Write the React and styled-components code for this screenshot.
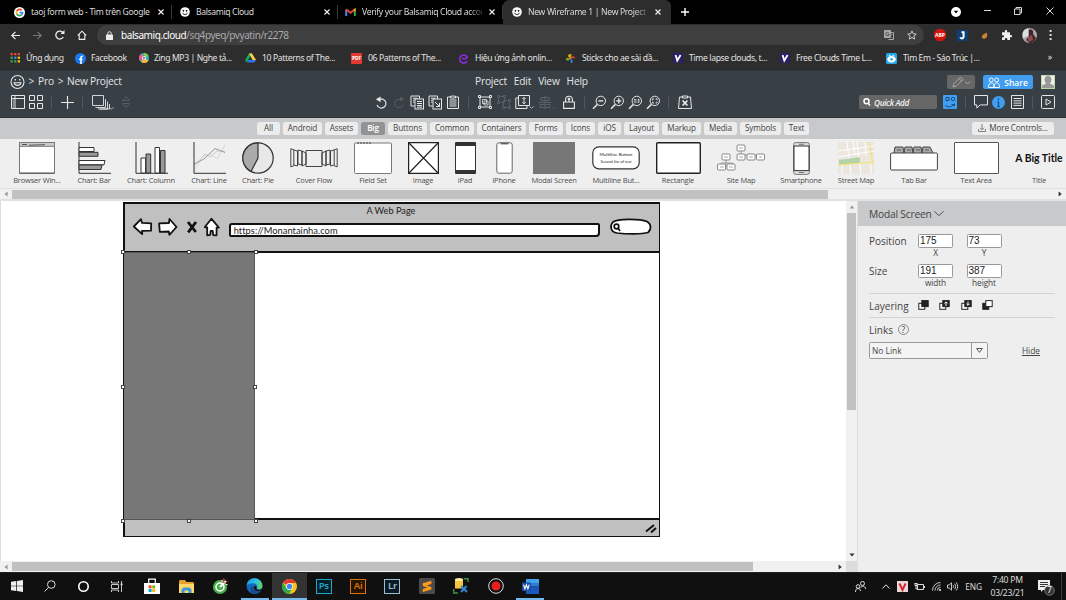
import React from "react";
import styled, { createGlobalStyle } from "styled-components";

const GlobalStyle = createGlobalStyle`
  * { box-sizing: border-box; }
  body { margin: 0; overflow: hidden; background: #000; }
  svg { display: block; flex: none; overflow: visible; }
`;

const ui = `"Noto Sans", "Open Sans", sans-serif`;
const app = `"Open Sans", "Noto Sans", sans-serif`;
const sketch = `Lato, "Open Sans", sans-serif`;

const Screen = styled.div`
  width: 1066px;
  height: 600px;
  display: flex;
  flex-direction: column;
  overflow: hidden;
  font-family: ${ui};
  white-space: nowrap;
`;
const Label = styled.span`
  letter-spacing: ${(p) => p.$ls || 0}px;
  white-space: pre;
`;
const Slot = styled.div`
  width: ${(p) => p.$w}px;
  height: 100%;
  flex: none;
  display: flex;
  align-items: center;
  justify-content: center;
`;

/* ---------- browser chrome ---------- */
const TabStrip = styled.div`
  height: 24px;
  flex: none;
  display: flex;
  background: #000;
  color: #dadada;
  font-size: 8.6px;
`;
const Tab = styled.div`
  width: ${(p) => p.$w}px;
  height: 24px;
  flex: none;
  display: flex;
  align-items: center;
  padding: 0 ${(p) => p.$pr}px 0 ${(p) => p.$pl}px;
  gap: 6px;
  background: ${(p) => (p.$active ? "#2d2d2d" : "transparent")};
  border-radius: 6px 6px 0 0;
`;
const TabTitle = styled.div`
  flex: 1;
  min-width: 0;
  letter-spacing: ${(p) => p.$ls || 0}px;
  mask-image: ${(p) => (p.$fade ? "linear-gradient(90deg,#000 88%,rgba(0,0,0,.15))" : "none")};
`;
const TabRule = styled.div`
  width: 1px;
  height: 14px;
  margin-top: 5px;
  background: #3a3a3a;
`;
const WindowControls = styled.div`
  margin-left: auto;
  height: 22px;
  display: flex;
`;
const AddressRow = styled.div`
  height: 22px;
  flex: none;
  display: flex;
  align-items: center;
  background: #2d2d2d;
`;
const NavButtons = styled.div`
  display: flex;
  height: 100%;
  padding-left: 4px;
`;
const Omnibox = styled.div`
  width: 827px;
  height: 20px;
  margin-left: 4px;
  display: flex;
  align-items: center;
  padding: 0 1px 0 9px;
  border-radius: 10px;
  background: #3f3f3f;
  color: #a9a9a9;
  font-size: 10px;
`;
const Url = styled.div`
  flex: 1;
  margin-left: 8px;
  letter-spacing: -0.43px;
  b { font-weight: 400; color: #fff; }
`;
const Bookmarks = styled.div`
  height: 25px;
  flex: none;
  display: flex;
  align-items: center;
  padding: 0 0 0 10px;
  background: #2d2d2d;
  border-bottom: 1px solid #303337;
  color: #e2e2e2;
  font-size: 8.6px;
`;
const Bookmark = styled.div`
  width: ${(p) => p.$w}px;
  flex: none;
  display: flex;
  align-items: center;
  gap: ${(p) => p.$gap || 5}px;
`;
const More = styled.div`
  margin-left: auto;
  padding: 0 14px 2px 0;
`;

/* ---------- application header ---------- */
const Header = styled.div`
  height: 47px;
  flex: none;
  display: flex;
  flex-direction: column;
  background: #383f45;
  border-bottom: 1px solid #2b3136;
  color: #e4e6e8;
  font-family: ${app};
`;
const TitleRow = styled.div`
  height: 20px;
  display: flex;
  align-items: center;
  font-size: 10.2px;
  padding-left: 10px;
`;
const Crumbs = styled.div`
  width: 465px;
  display: flex;
  align-items: center;
  gap: 3.6px;
`;
const Menus = styled.div`
  flex: 1;
  display: flex;
  gap: 7px;
`;
const Account = styled.div`
  display: flex;
  align-items: center;
  padding: 2px 11px 0 0;
`;
const PencilButton = styled.div`
  width: 28px;
  height: 14px;
  display: flex;
  align-items: center;
  justify-content: center;
  border-radius: 2px;
  background: #666;
`;
const ShareButton = styled.div`
  width: 50px;
  height: 14px;
  margin: 0 8px;
  display: flex;
  align-items: center;
  justify-content: center;
  gap: 4px;
  border-radius: 2px;
  background: #409df0;
  color: #fff;
  font-size: 8.5px;
  font-weight: 600;
`;
const ToolRow = styled.div`
  height: 22px;
  display: flex;
  align-items: center;
`;
const QuickAdd = styled.div`
  width: 78px;
  height: 14px;
  margin-left: 164px;
  display: flex;
  align-items: center;
  gap: 4px;
  padding-left: 4px;
  border-radius: 2px;
  background: #666;
  color: #f3f3f3;
  font-size: 8.2px;
  font-style: italic;
  font-weight: 600;
  letter-spacing: -0.3px;
`;
const Divider = styled.div`
  width: 1px;
  height: 13px;
  background: #50575d;
`;

/* ---------- component library ---------- */
const CategoryBar = styled.div`
  height: 21px;
  flex: none;
  display: flex;
  align-items: center;
  gap: 3px;
  padding: 0 12px 1px 257px;
  background: #c7c9ca;
  font-family: ${app};
`;
const Pill = styled.div`
  width: ${(p) => p.$w}px;
  height: 13px;
  flex: none;
  display: flex;
  align-items: center;
  justify-content: center;
  gap: 3px;
  border-radius: 2.5px;
  background: ${(p) => (p.$on ? "#929292" : "#ececec")};
  color: ${(p) => (p.$on ? "#fff" : "#444")};
  font-size: 8.2px;
  line-height: 11px;
  padding-bottom: 1px;
  font-weight: ${(p) => (p.$on ? 600 : 400)};
  letter-spacing: -0.16px;
  margin-left: ${(p) => (p.$end ? "auto" : 0)};
`;
const Shelf = styled.div`
  height: 50px;
  flex: none;
  display: grid;
  grid-template-columns: 56px 58px 56px 60px 38px 74px 44px 56px 28px 50px 50px 74px 50px 76px 44px 66px 50px 74px 52px;
  padding-left: 9px;
  background: #efefef;
  border-bottom: 1px solid #e0e0e0;
  font-family: ${app};
`;
const ShelfItem = styled.div`
  display: flex;
  flex-direction: column;
  align-items: center;
  color: #4d4d4d;
  font-size: 7.5px;
  line-height: 9px;
`;
const Preview = styled.div`
  height: 37px;
  padding-top: 1px;
  flex: none;
  display: flex;
  align-items: center;
  justify-content: center;
`;
const BigTitle = styled.div`
  color: #111;
  font-family: Lato, sans-serif;
  font-weight: 700;
  font-size: 10.4px;
`;

/* ---------- scrollbars ---------- */
const HScroll = styled.div`
  height: ${(p) => p.$h}px;
  flex: none;
  display: flex;
  align-items: center;
  justify-content: space-between;
  padding: 0 3px;
  background: #f1f1f1;
  border-bottom: ${(p) => (p.$line ? "2px solid #e1e1e1" : "0")};
`;
const HThumb = styled.div`
  width: ${(p) => p.$w}px;
  height: 9px;
  margin: 0 auto 0 3px;
  background: #c1c1c1;
`;
const VScroll = styled.div`
  width: 11px;
  flex: none;
  display: flex;
  flex-direction: column;
  align-items: center;
  background: #f1f1f1;
  padding: 3px 0 3px;
`;
const VThumb = styled.div`
  width: 9px;
  height: 197px;
  margin: 3px 0 auto;
  background: #c1c1c1;
`;
const Corner = styled.div`
  width: 11px;
  background: #dcdcdc;
`;
const BottomScroll = styled.div`
  height: 11px;
  flex: none;
  display: flex;
  > :first-child { flex: 1; }
`;

/* ---------- workspace ---------- */
const Work = styled.div`
  height: 371px;
  flex: none;
  display: flex;
`;
const Editor = styled.div`
  width: 857px;
  display: flex;
  flex-direction: column;
`;
const CanvasRow = styled.div`
  flex: 1;
  display: flex;
`;
const Canvas = styled.div`
  flex: 1;
  position: relative;
  background: #fff;
  border-left: 1px solid #ddd;
`;
const MockWindow = styled.div`
  position: absolute;
  left: 121.7px;
  top: 0.7px;
  width: 537.6px;
  height: 335.4px;
  display: flex;
  flex-direction: column;
  border: 1.5px solid #111;
  border-width: 2px 1.5px 1.5px 2px;
  color: #222;
  font-family: ${sketch};
`;
const MockTop = styled.div`
  height: 49px;
  background: #c0c0c0;
  border-bottom: 2px solid #111;
`;
const MockTitle = styled.div`
  height: 12px;
  line-height: 14px;
  padding-right: 2px;
  text-align: center;
  font-size: 9.2px;
`;
const MockNav = styled.div`
  height: 22px;
  display: flex;
  align-items: center;
`;
const MockUrl = styled.div`
  width: 371px;
  height: 14px;
  margin: 6px 10px 0 8px;
  padding-left: 3px;
  line-height: 11px;
  font-size: 9.3px;
  letter-spacing: 0.04px;
  background: #fff;
  border: 2px solid #111;
  border-radius: 3px 2px 4px 2px;
`;
const MockFoot = styled.div`
  height: 18px;
  margin-top: auto;
  display: flex;
  align-items: center;
  justify-content: flex-end;
  padding-right: 2px;
  background: #c0c0c0;
  border-top: 2px solid #111;
`;
const Modal = styled.div`
  position: absolute;
  left: 123px;
  top: 51px;
  width: 131px;
  height: 268px;
  background: #777;
  border: 1px solid #555;
  border-width: 1px 1px 1px 0;
`;
const Handle = styled.i`
  position: absolute;
  left: ${(p) => p.$x}px;
  top: ${(p) => p.$y}px;
  width: 4px;
  height: 4px;
  background: #fff;
  border: 1px solid #444;
`;

/* ---------- inspector ---------- */
const Inspector = styled.div`
  flex: 1;
  background: #eee;
  border-left: 1px solid #ddd;
  color: #444;
  font-family: ${app};
`;
const PanelTitle = styled.div`
  height: 25px;
  display: flex;
  align-items: center;
  gap: 2px;
  padding-left: 11px;
  background: #c7c9ca;
  font-size: 10.2px;
  letter-spacing: -0.18px;
`;
const Field = styled.div`
  height: ${(p) => p.$h}px;
  display: flex;
  align-items: flex-start;
`;
const FieldName = styled.div`
  width: 49px;
  line-height: 14px;
  font-size: 10px;
`;
const Panel = styled.div`
  padding: 8px 11px 0 11px;
`;
const NumberCell = styled.div`
  width: 35px;
  margin-right: 13.5px;
  text-align: center;
  font-size: 8.3px;
  letter-spacing: -0.1px;
  line-height: 10px;
`;
const NumberBox = styled.div`
  height: 14px;
  padding-left: 1px;
  text-align: left;
  background: #fff;
  border: 1px solid #999;
  border-radius: 1.5px;
  color: #222;
  font: 10px/12px "Liberation Sans", sans-serif;
  letter-spacing: 0;
`;
const Section = styled.div`
  display: flex;
  align-items: center;
  height: ${(p) => p.$h}px;
  border-top: 1px solid #d2d2d2;
  font-size: 10px;
`;
const LayerIcons = styled.div`
  display: flex;
  gap: 10.5px;
  padding: 0 0 2px 9px;
`;
const Help = styled.div`
  width: 11px;
  height: 11px;
  margin-left: 5px;
  border: 1px solid #888;
  border-radius: 50%;
  font-size: 8.5px;
  line-height: 9px;
  text-align: center;
`;
const LinkRow = styled.div`
  display: flex;
  align-items: center;
  justify-content: space-between;
  padding-right: 15px;
  font-size: 8.4px;
`;
const Select = styled.div`
  width: 119px;
  height: 17px;
  display: flex;
  border: 1px solid #999;
  border-radius: 1.5px;
  background: #f4f4f4;
  line-height: 15px;
  padding-left: 2px;
`;
const SelectArrow = styled.div`
  width: 16px;
  margin-left: auto;
  display: flex;
  align-items: center;
  justify-content: center;
  border-left: 1px solid #999;
`;

/* ---------- taskbar ---------- */
const Taskbar = styled.div`
  height: 28px;
  flex: none;
  display: flex;
  background: #101010;
  border-top: 1px solid #222;
  color: #ddd;
`;
const Task = styled(Slot)`
  background: ${(p) => (p.$active ? "#333" : "transparent")};
  position: relative;
  margin-left: ${(p) => p.$ml || 0}px;
  padding-bottom: 1px;
  &::after {
    content: "";
    display: ${(p) => (p.$running ? "block" : "none")};
    position: absolute;
    bottom: 0;
    width: ${(p) => (p.$active ? 34.4 : 28)}px;
    height: 2px;
    background: #76b9ed;
  }
`;
const AdobeTile = styled.div`
  width: 16px;
  height: 15px;
  display: flex;
  align-items: center;
  justify-content: center;
  border: 1.4px solid ${(p) => p.$c};
  background: ${(p) => p.$bg};
  color: ${(p) => p.$c};
  font-size: 9.6px;
  font-weight: 600;
  letter-spacing: -0.3px;
  line-height: 10px;
`;
const Tray = styled.div`
  margin-left: auto;
  display: flex;
  font-size: 8.3px;
`;
const Clock = styled.div`
  text-align: center;
  font-size: 8.6px;
  line-height: 12.6px;
  letter-spacing: -0.26px;
`;
const ShowDesktop = styled.div`
  width: 5px;
  border-left: 1px solid #3b3b3b;
`;

/* ---------- small drawings ---------- */
const Svg = ({ w = 14, h = w, v, c = "currentColor", s = 1, f = "none", children }) => (
  <svg width={w} height={h} viewBox={v || `0 0 ${w} ${h}`} fill={f} stroke={c} strokeWidth={s}>{children}</svg>
);
const Cross = () => <Svg w={6} c="#eee" s={1.2}><path d="M.5 .5l5 5M5.5 .5l-5 5" /></Svg>;
const Google = () => (
  <Svg w={11} s={1.7}>
    <circle cx="5.5" cy="5.5" r="5.5" fill="#fff" stroke="none" />
    <path d="M7.7 3.3A3.1 3.1 0 0 0 2.8 4" stroke="#ea4335" />
    <path d="M2.8 4a3.1 3.1 0 0 0 0 3" stroke="#fbbc05" />
    <path d="M2.8 7a3.1 3.1 0 0 0 4.8 .8" stroke="#34a853" />
    <path d="M7.6 7.8c.7-.6 1-1.3 1-2.2H5.5" stroke="#4285f4" />
  </Svg>
);
const Smile = () => (
  <Svg w={10} c="#000" s={0.9}>
    <circle cx="5" cy="5" r="4.8" fill="#fff" stroke="none" />
    <circle cx="3.4" cy="3.8" r=".5" fill="#000" /><circle cx="6.6" cy="3.8" r=".5" fill="#000" />
    <path d="M2.4 5.8c1 2.2 4.2 2.2 5.2 0" />
  </Svg>
);
const Gmail = () => (
  <Svg w={11} h={8} s={2}>
    <path d="M1.2 8V1.8" stroke="#4285f4" /><path d="M9.8 8V1.8" stroke="#34a853" />
    <path d="M1 1.2l4.5 3.5L10 1.2" stroke="#ea4335" />
    <path d="M9 2l1-.8v2" stroke="#fbbc04" strokeWidth="1.4" />
  </Svg>
);
const Violet = () => (
  <Svg w={10} s={1.8} c="#fff"><rect width="10" height="10" fill="#2b2067" stroke="none" /><path d="M2.6 2l1.7 5.5L7.6 2" /></Svg>
);
const Tri = ({ d, c = "#555" }) => (
  <Svg w={6} c="none" f={c}>
    <path d={{ l: "M4.6 .6v4.8L1.4 3z", r: "M1.6 .4v5.2L4.8 3z", u: "M.6 4.4h4.8L3 1.6z", d: "M.4 1.6h5.2L3 4.6z" }[d]} />
  </Svg>
);
const Chev = ({ w = 6, c = "currentColor" }) => <Svg w={w} h={w / 2} c={c} s={0.9}><path d={`M.4 .4L${w / 2} ${w / 2 - 0.4}L${w - 0.4} .4`} /></Svg>;

const tabs = [
  { w: 171, pl: 14, pr: 7, icon: <Google />, t: "taoj form web - Tìm trên Google", ls: -0.33 },
  { w: 165, pl: 8, pr: 7, icon: <Smile />, t: "Balsamiq Cloud", ls: -0.36 },
  { w: 164, pl: 7, pr: 7, icon: <Gmail />, t: "Verify your Balsamiq Cloud accou", fade: true, ls: -0.34 },
  { w: 168, pl: 9, pr: 10, icon: <Smile />, t: "New Wireframe 1 | New Project |", fade: true, active: true, ls: -0.33 },
];

const bookmarks = [
  { w: 65, t: "Ứng dụng", gap: 6, ls: -0.4, i: (
    <Svg w={10} c="none">
      {[0, 1, 2].map((r) => [0, 1, 2].map((k) => (
        <rect key={`${r}${k}`} x={0.5 + k * 3.6} y={r * 3.6} width="2.3" height="2.3" fill={[["#e94335", "#e94335", "#e94335"], ["#34a853", "#4285f4", "#fbbc05"], ["#34a853", "#34a853", "#fbbc05"]][r][k]} />
      )))}
    </Svg>) },
  { w: 64, t: "Facebook", i: <Svg w={11} c="#fff" s={1.6}><circle cx="5.5" cy="5.5" r="5.5" fill="#1877f2" stroke="none" /><path d="M6 11V4.8c0-1.2.6-1.7 1.8-1.6M4 6.3h3.4" /></Svg> },
  { w: 106, t: "Zing MP3 | Nghe tả...", ls: -0.4, i: (
    <Svg w={10} c="none"><circle cx="5" cy="5" r="5" fill="#1cb9bd" /><path d="M5 5L1 8a5 5 0 0 1 2-7.6z" fill="#f05a79" /><path d="M5 5l4.5 2.5A5 5 0 0 1 2 9z" fill="#f6b53c" /><path d="M5 5L5 0a5 5 0 0 1 4.6 3z" fill="#7dc855" /><circle cx="5" cy="5" r="2.1" fill="#efe9f5" /><path d="M4.3 3.6L6.4 5 4.3 6.4z" fill="#8a3aa8" /></Svg>) },
  { w: 106, t: "10 Patterns of The...", gap: 6, i: (
    <Svg w={11} h={10} c="none"><path d="M4 .5h3L3.2 7 1.7 9.6 0 7z" fill="#0fa960" /><path d="M4 .5h3l4 6.5H7.6z" fill="#ffcf48" /><path d="M3.5 7H11L9.4 9.6H1.8z" fill="#2f74e6" /></Svg>) },
  { w: 108, t: "06 Patterns of The...", gap: 6, i: (
    <Svg w={11} c="none"><rect width="11" height="11" rx="1" fill="#e33b32" /><text x="5.5" y="7.2" fontSize="4.8" fontWeight="700" fill="#fff" textAnchor="middle">PDF</text></Svg>) },
  { w: 107, t: "Hiệu ứng ảnh onlin...", gap: 7, i: <Svg w={9} h={10} s={1.7} c="#8a2be2"><path d="M8 8.2A4 4 0 1 1 8.2 4.2C7.6 5.8 5 6 3 5.3" /></Svg> },
  { w: 107, t: "Sticks cho ae sài dầ...", gap: 7, i: (
    <Svg w={9} c="none"><path d="M4.3 4.3V0C2.5 0 1.8 1.8 2.4 2.6z" fill="#fbbc04" /><path d="M4.7 4.3H9C9 2.6 7.6 1.9 6.4 2.4z" fill="#ea4335" /><path d="M4.7 4.7V9c1.8 0 2.4-1.6 1.9-2.6z" fill="#4285f4" /><path d="M4.3 4.7H0c0 1.8 1.7 2.4 2.6 1.9z" fill="#34a853" /><path d="M4 0h1.6v5H4zM0 4h4v1.6H0z" fill="#fbbc04" opacity=".6" /></Svg>) },
  { w: 107, t: "Time lapse clouds, t...", gap: 6, i: <Violet /> },
  { w: 106, t: "Free Clouds Time L...", gap: 6, i: <Violet /> },
  { w: 105, t: "Tìm Em - Sáo Trúc |...", gap: 6, ls: -0.42, i: (
    <Svg w={11} c="#fff"><rect width="11" height="11" rx="1.5" fill="#27a9ea" stroke="none" /><ellipse cx="5.5" cy="6.3" rx="3.8" ry="2.8" fill="#fff" /><circle cx="5.5" cy="6.3" r="1.3" fill="#27a9ea" stroke="none" /><path d="M3 2.4l2 1M8 2.4l-2 1" /></Svg>) },
];

const lens = (inner) => (
  <Svg w={15} s={1}><circle cx="8.8" cy="5.9" r="4.7" /><path d="M5.4 9.4L1 13.8" strokeWidth="1.5" />{inner}</Svg>
);
const copyBase = <><path d="M4.5 11H1V1h8.5v3" /><path d="M3 3.2h4.5M3 5.2h1.5M3 7.2h1.5" /><rect x="5" y="4" width="8.5" height="10" fill="#383f45" /></>;

const leftTools = [
  [18, <Svg w={14}><path d="M.5 .5h13v13H.5zM.5 3.5h13M4 .5v13" /><path d="M2.2 3.5v10" strokeWidth=".6" /></Svg>],
  [18, <Svg w={14}><path d="M.5 .5h5v5h-5zM8.5 .5h5v5h-5zM.5 8.5h5v5h-5zM8.5 8.5h5v5h-5z" /></Svg>],
  [13, <Divider />],
  [18, <Svg w={13} s={1.2}><path d="M6.5 0v13M0 6.5h13" /></Svg>],
  [13, <Divider />],
  [25, <Svg w={20} h={15}><path d="M.5 .5h11v10H.5zM3.5 12.500h10V4M6 14h9.500V6.500M17.500 9v5H8" strokeWidth=".9" /><path d="M17.5 12.5l2 1.7 2-2" strokeWidth=".7" /></Svg>],
  [24, <Svg w={8} h={12} c="#565c61"><path d="M.5 4.5h7L4 .6zM.5 7.5h7L4 11.4z" /></Svg>],
];
const midTools = [
  [18, <Svg w={13} s={1.2}><path d="M4 3.2h4A4.6 4.6 0 1 1 2 9" /><path d="M5.6 .4v5.8L.8 3.3z" fill="currentColor" stroke="none" /></Svg>],
  [18, <Svg w={12} c="#565c61"><path d="M8 3.2H5A4.3 4.3 0 1 0 10 8.6" /><path d="M7.2 .6v5l4-2.5z" fill="#565c61" stroke="none" /></Svg>],
  [18, <Svg w={15}>{copyBase}<path d="M7 6.5h5M7 8.5h5M7 10.5h5M7 12.2h5" /></Svg>],
  [18, <Svg w={15}>{copyBase}<path d="M7 7l4.5 4.5M11.5 8v3.5H8" /></Svg>],
  [18, <Svg w={12} h={14}><path d="M.5 2h11v11.5H.5zM2.5 5h7M2.5 7h7M2.5 9h7M2.5 11h7" /><path d="M3.5 3V1.2h1.7a1 1 0 0 1 1.6 0h1.7V3z" fill="#383f45" /></Svg>],
  [13, <Divider />],
  [20, <Svg w={14}><path d="M2 2h10v10H2z" /><path d="M.5 .5h2v2h-2zM11.5 .5h2v2h-2zM.5 11.5h2v2h-2zM11.5 11.5h2v2h-2z" /><path d="M4.5 4.5h4v4h-4zM6 6h4v4H6z" strokeWidth=".8" /></Svg>],
  [17, <Svg w={14} c="#5a6166" s={0.9}><path d="M1.5 1.5h6v6h-6zM6.5 5.5h6v7h-6z" /><path d="M.5 .5h2v2h-2zM6.5 .5h2v2h-2zM.5 6.5h2v2h-2zM11.5 4.5h2v2h-2zM11.5 11.5h2v2h-2zM5.5 11.5h2v2h-2z" fill="#383f45" /></Svg>],
  [24, <Svg w={19} h={14}><path d="M3.5 .5h11v10h-11zM3 3H.8v10.5H12V11" /><path d="M9 2.6v6M7.4 4L9 2.4 10.6 4M7.4 7.2L9 8.8l1.6-1.6" /><path d="M14.5 11.5l2 1.8 2-2" strokeWidth=".7" /></Svg>],
  [22, <Svg w={19} h={13} c="#5a6166"><path d="M.5 6.5h13M7 0v13M3 1.5h8v3H3zM2 8.5h10v3H2z" /><path d="M14.5 11l2 1.8 2-2" strokeWidth=".7" /></Svg>],
  [21, <Svg w={12} h={14} s={1.1}><path d="M.6 7h10.8v6.4H.6zM2.6 7V4.6a3.4 3.4 0 0 1 6.8 0V7" /><path d="M6 4.500v2.500" /><circle cx="6" cy="4" r=".8" /></Svg>],
  [10, <Divider />],
  [20, lens(<path d="M6.4 5.9h4.8" strokeWidth="1.4" />)],
  [17, lens(<path d="M6.2 5.9h5.2M8.8 3.3v5.2" strokeWidth="1.4" />)],
  [19, lens(<path d="M7 4v4M10.8 4v4M8.9 4.5v.9M8.9 6.6v.9M6.2 4.6l.8-.5M10 4.6l.8-.5" />)],
  [17, lens(<path d="M6.6 5.2V3.9h1.3M9.7 3.9H11v1.3M11 6.7V8H9.7M7.9 8H6.6V6.7" />)],
  [13, <Divider />],
  [20, <Svg w={14}><path d="M1.5 2h11l1 11.5H.5z" /><path d="M4.5 3V1h5v2z" fill="#383f45" /><path d="M4.6 5.5l4.8 5M9.4 5.5l-4.8 5" strokeWidth="1.8" /></Svg>],
];
const rightTools = [
  [25, <Svg w={14} c="#1d4d7c"><rect width="14" height="14" rx="1" fill="#409df0" stroke="none" /><path d="M3 2.5h3v3H3z" /><circle cx="10" cy="4" r="1.7" /><path d="M2 10.500c2.500 1.800 6 1.800 9-.5M11.500 8.500v2.500M8.500 9.500h3.500" /></Svg>],
  [6, <Divider />],
  [25, <Svg w={14}><path d="M.5 .5h13v9.4H6.2L2.8 13V9.9H.5z" /></Svg>],
  [11, <Svg w={13} c="#1b4f80" s={1.3}><circle cx="6.5" cy="6.5" r="6.5" fill="#409df0" stroke="none" /><path d="M6.5 5.5V11M6.5 2.6v1.6M5.4 5.8h1M5.2 10.6h2.6" /></Svg>],
  [26, <Svg w={13} h={14}><path d="M.5 .5h12v13H.5zM2.5 3.5h8M2.5 5.8h8M2.5 8.1h8M2.5 10.4h8" /></Svg>],
  [5, <Divider />],
  [26, <Svg w={14}><rect x=".5" y=".5" width="13" height="13" rx="1" /><path d="M5 4l5 3-5 3z" /></Svg>],
];

const categories = [["All", 23], ["Android", 39], ["Assets", 33], ["Big", 24], ["Buttons", 39], ["Common", 44], ["Containers", 49], ["Forms", 34], ["Icons", 29], ["iOS", 23], ["Layout", 35], ["Markup", 39], ["Media", 33], ["Symbols", 41], ["Text", 25]];

const K = "#333";
const box = (w, h, s, c = K, r = 0) => <Svg w={w} h={h} c={c} s={s}><rect x={s / 2} y={s / 2} width={w - s} height={h - s} rx={r} fill="#fff" /></Svg>;
const node = (x, y) => <rect key={`${x}-${y}`} x={x} y={y} width="8" height="6" rx="1" fill="#fff" />;
const shelf = [
  ["Browser Win...", <Svg w={36} h={32} c="#777"><path d="M.5 .5h35v31H.5z" fill="#fff" /><path d="M.5 .5h35v3.8H.5z" fill="#ccc" /><path d="M3 2.5h5M10 3.2l16-.5M.5 31h35" stroke="#555" /></Svg>],
  ["Chart: Bar", <Svg w={33} h={32} c={K}><path d="M1 0v31.3h32" /><path d="M1 5.5h15v4H1zM1 18.5h26l-1 4.3H1z" fill="#fff" /><path d="M1 10.3h19v4H1zM1 23h23l-1 4.5H1z" fill="#999" /></Svg>],
  ["Chart: Column", <Svg w={33} h={32} c={K}><path d="M1 0v31.3h32" /><path d="M6 16h4.6v15H6zM20 5.5h4.5V31H20z" fill="#fff" /><path d="M11 12h4.7v19H11zM25.5 8.5H30V31h-4.5z" fill="#999" /></Svg>],
  ["Chart: Line", <Svg w={33} h={32} c={K}><path d="M1 24L12 12l5 3 7-6h8" stroke="#ccc" /><path d="M1 30l8-15 8-3 7 5 8-14" stroke="#d8d8d8" /><path d="M1 22l10-5L22 6.5l10 4" stroke="#999" /><path d="M1 0v31.3h32" /></Svg>],
  ["Chart: Pie", <Svg w={32} c={K} s={1.2}><circle cx="16" cy="16" r="15.2" fill="#e8e8e8" /><path d="M16 .8V16L9 29.5A15.2 15.2 0 0 1 16 .8z" fill="#aaa" /></Svg>],
  ["Cover Flow", <Svg w={48} h={20} c={K} s={0.9}><path d="M16 2.5h16v16H16z" fill="#eee" /><path d="M.8 .8l3 1v16l-3 1zM4 2l3.5 1v15L4 17M8 2l4 1v14l-4-1zM12 3l4 2v11l-4 2zM47.2 .8l-3 1v16l3 1zM44 2l-3.5 1v15l3.5-1M40 2l-4 1v14l4-1zM36 3l-4 2v11l4 2z" /></Svg>],
  ["Field Set", <Svg w={38} h={32} c="#777"><rect x=".5" y="1" width="37" height="30.5" rx="1" fill="#fff" /><path d="M3 1h15" stroke="#444" strokeDasharray="2 1" /></Svg>],
  ["Image", <Svg w={31} h={32} c="#222" s={1.2}><path d="M.6 .6h29.8v30.8H.6z" fill="#fff" /><path d="M1 1l29 30M30 1L1 31" /></Svg>],
  ["iPad", <Svg w={21} h={32} c={K}><path d="M.5 .5h20v31H.5z" fill="#fff" /><path d="M1 1h19v2.500H1zM1 28.500h19V31H1z" fill={K} /></Svg>],
  ["iPhone", <Svg w={17} h={32} c="#666"><rect x=".8" y=".8" width="15.4" height="30.4" rx="2" fill="#fff" /><path d="M4.5 1.5h8" strokeWidth="1.8" /></Svg>],
  ["Modal Screen", <Svg w={42} h={32} c="none"><path d="M0 0h42v32H0z" fill="#777" /></Svg>],
  ["Multiline But...", <Svg w={48} h={24} c={K} s={1.2}><rect x=".8" y=".8" width="46.4" height="22" rx="6" fill="#fff" /><g stroke="none" fill="#222" fontFamily="Lato" textAnchor="middle"><text x="24" y="10" fontSize="4.6">Multiline Button</text><text x="24" y="17" fontSize="3.8">Second line of text</text></g></Svg>],
  ["Rectangle", box(45, 32, 1.4, "#222", 1)],
  ["Site Map", <Svg w={48} h={28} c="#888"><path d="M24 7v6M9 16v7M4 22v-3h12v3M20 11h28M9 11v3" strokeWidth=".8" />{[[20, 1], [5, 10], [20, 10], [30, 10], [39.5, 10], [.5, 20], [10, 20]].map(([x, y]) => node(x, y))}<path d="M22 4h4M7 13h4M22 13h4M32 13h4M42 13h3M3 23h4M12 23h4" strokeWidth=".7" /></Svg>],
  ["Smartphone", <Svg w={17} h={33} c="#777"><rect x=".6" y=".6" width="15.8" height="31.8" rx="2" fill="#ddd" /><path d="M1 4h15v24.6H1z" fill="#fff" stroke="#333" /><path d="M6 2.3h5M6 30.5h5" /></Svg>],
  ["Street Map", <Svg w={36} h={32} c="#fff" s={1}><path d="M0 0h36v32H0z" fill="#ebe7df" stroke="none" /><path d="M9 0l4 32M19 0l4 32M0 9l36-5M0 15l36-6M15 0l2 13M27 0l1 14M4 23v9M33 22v10" /><path d="M1 18l21-3v6L1 23z" fill="#b5d3a7" stroke="none" /><path d="M0 23l36-3M31 0l4 22" stroke="#f7e36b" strokeWidth="1.2" /></Svg>],
  ["Tab Bar", <Svg w={48} h={25} c="#444"><path d="M4 7l1-6h8l1 6M14 7l1-6h7l1 6M23 7l1-6h7l1 6M32 7l1-6h7l3 6" fill="#aaa" /><path d="M7 4h4M17 4h4M26 4h4M35 4h4" strokeWidth=".8" /><rect x=".6" y="7" width="46.8" height="17" rx="1" fill="#fff" /></Svg>],
  ["Text Area", box(45, 32, 1, "#555", 0.5)],
  ["Title", <BigTitle>A Big Title</BigTitle>],
];

const layer = (front, sign) => (
  <Svg w={11} h={10} c="#222"><rect x=".8" y="3.3" width="6" height="6" fill={front ? "#fff" : "#222"} /><rect x="3.8" y=".6" width="6.4" height="6" fill={front ? "#222" : "#fff"} />{sign && <path d={sign} stroke="#fff" />}</Svg>
);

const cm = "#111";
const tasks = [
  { i: <Svg w={12} c="none" f="#eee"><path d="M0 1.8L5.3 1v4.7H0zM6 .9L12 0v5.7H6zM0 6.3h5.3V11L0 10.2zM6 6.3h6V12l-6-.9z" /></Svg>, w: 33.4 },
  { i: <Svg w={12}><circle cx="7.3" cy="4.5" r="3.8" /><path d="M4.6 7.4L.5 11.5" /></Svg>, w: 33.4 },
  { i: <Svg w={11} c="#fff" s={1.6}><circle cx="5.5" cy="5.5" r="4.7" /></Svg>, w: 33.4 },
  { i: <Svg w={12} h={11} s={0.9}><path d="M.5 0v2h7V0M.5 11V9h7v2M.5 3.5h7v4h-7zM10.5 0v11" /><path d="M9.6 3.4h2" strokeWidth="1.6" /></Svg>, w: 33.4 },
  { ml: 1, i: <Svg w={16} c="none"><path d="M0 5h16v11H0z" fill="#fff" /><path d="M4.7 5V1.2h6.6V5" stroke="#fff" strokeWidth="1.2" /><path d="M4.6 7.4h3v3h-3z" fill="#f25022" /><path d="M8.2 7.4h3v3h-3z" fill="#7fba00" /><path d="M4.6 11h3v3h-3z" fill="#00a4ef" /><path d="M8.2 11h3v3h-3z" fill="#ffb900" /></Svg> },
  { i: <Svg w={15} h={13} c="none"><path d="M0 1l1-1h5l1.4 2H14l1 1v10H0z" fill="#e3a32c" /><path d="M0 4h15v9H0z" fill="#ffd869" /><path d="M2.5 13V9.5l2-2h6l2 2V13h-3v-2.5h-4V13z" fill="#3b97dd" /></Svg> },
  { i: <Svg w={15} c="none"><circle cx="7" cy="8" r="7" fill="#4aae4e" /><circle cx="7" cy="8" r="4" fill="none" stroke="#fff" strokeWidth="1.5" /><path d="M7 8l6-6" stroke="#fff" strokeWidth="2" /><path d="M8 1h1.6v3zM11.5 5h3v1.6z" fill="#eee" /><path d="M10 0h1.5l-1 4zM14.5 2.4l-3.4 2" stroke="#e44" strokeWidth=".8" /></Svg> },
  { running: true, i: <Svg w={17} h={16} c="none"><defs><linearGradient id="eg" x1="0" y1="0" x2="1" y2=".4"><stop stopColor="#1d8fe0" /><stop offset=".6" stopColor="#2fc2df" /><stop offset="1" stopColor="#5bd36c" /></linearGradient></defs><circle cx="8.5" cy="8" r="8" fill="#1268b9" /><path d="M.6 7A8 8 0 0 1 16.5 8c0 3-3 4-5.6 3.2C12.4 9 11 5.5 7.6 5.2 4.5 5 2 6 .6 7z" fill="url(#eg)" /><path d="M7 8c-.6 3 2.6 6 8 4.6-2 3-6 3.8-9 2.6C3 13 4 8 7 8z" fill="#1b4a93" /><path d="M8.6 8c1.6-.4 2.6 1 1.5 2.6.8 1.2 3.6 1.6 5.8.2l-1 1.8c-5 1.4-8.5-2-6.3-4.6z" fill={cm} /></Svg> },
  { running: true, active: true, i: <Svg w={15} c="none"><circle cx="7.5" cy="7.5" r="7.5" fill="#fbc116" /><path d="M7.5 7.5L1 3.7A7.5 7.5 0 0 1 14 4H7.5z" fill="#e33b2e" /><path d="M1 3.8A7.5 7.5 0 0 0 7 15l3.5-6L7.5 7.5 4.5 9z" fill="#2da94f" /><circle cx="7.5" cy="7.5" r="3.4" fill="#fff" /><circle cx="7.5" cy="7.5" r="2.7" fill="#4286f5" /></Svg> },
  { i: <AdobeTile $c="#1fa8c9" $bg="#001d26">Ps</AdobeTile> },
  { i: <AdobeTile $c="#d9730f" $bg="#261300">Ai</AdobeTile> },
  { i: <AdobeTile $c="#9dbdcf" $bg="#0b1a24">Lr</AdobeTile> },
  { i: <Svg w={16} c="none"><rect width="16" height="16" rx="1.5" fill="#4a4a4a" /><path d="M3.8 5.3l8.6-2.5v3.1L7.5 7.4l4.9 1.5v2.6l-8.6 2.6V11l4.6-1.5-4.6-1.5z" fill="#ff9a1a" /></Svg> },
  { i: <Svg w={16} c="none"><path d="M2 1.5h8v9H2z" fill="#f6c443" /><ellipse cx="6" cy="1.5" rx="4" ry="1.5" fill="#fff0a8" /><path d="M8 8l6 6M13.5 8L8 14" stroke="#2f86d6" strokeWidth="2" /><path d="M11 .7h4V4M.7 11v4H5" stroke="#3c9442" strokeWidth="1.4" /></Svg> },
  { i: <Svg w={16} c="#ddd" s={1}><circle cx="8" cy="8" r="7.3" /><circle cx="8" cy="8" r="4.5" fill="#e91e1e" stroke="none" /></Svg> },
  { running: true, i: <Svg w={17} h={15} c="none"><path d="M4 0h13v4H4z" fill="#41a5ee" /><path d="M4 4h13v3.5H4z" fill="#2b7cd3" /><path d="M4 7.5h13V15H4z" fill="#185abd" /><rect y="3.5" width="9" height="8.5" rx=".6" fill="#1a4fa5" /><path d="M1.6 5.6l1.3 4.3 1.5-4 1.5 4 1.3-4.3" stroke="#fff" strokeWidth="1.1" /></Svg> },
];

export default function App() {
  return (
    <Screen>
      <GlobalStyle />
      <TabStrip>
        {tabs.map((t, i) => (
          <React.Fragment key={t.t}>
            <Tab $w={t.w} $pl={t.pl} $pr={t.pr} $active={t.active}>
              {t.icon}
              <TabTitle $fade={t.fade} $ls={t.ls}>{t.t}</TabTitle>
              <Cross />
            </Tab>
            {i < 3 && <TabRule />}
          </React.Fragment>
        ))}
        <Slot $w={27}><Svg w={8} c="#fff" s={1.4}><path d="M4 0v8M0 4h8" /></Svg></Slot>
        <WindowControls>
          <Slot $w={32}><Svg w={10} c="none"><circle cx="5" cy="6" r="5" fill="#fff" /><path d="M2.8 4.7h4.4L5 7.6z" fill="#000" /></Svg></Slot>
          <Slot $w={30}><Svg w={7} h={2}><path d="M0 .5h7" /></Svg></Slot>
          <Slot $w={32}><Svg w={8}><path d="M.5 2h5.5v5.5H.5zM2 2V.5h5.5V6H6" /></Svg></Slot>
          <Slot $w={32}><Svg w={8}><path d="M.5 .5l7 7M7.5 .5l-7 7" /></Svg></Slot>
        </WindowControls>
      </TabStrip>

      <AddressRow>
        <NavButtons>
          <Slot $w={22}><Svg w={9} c="#eee" s={1.2}><path d="M9 4.5H1M4.5 .8L.8 4.5l3.700 3.700" /></Svg></Slot>
          <Slot $w={23}><Svg w={9} c="#777" s={1.2}><path d="M0 4.5h8M4.5 .8l3.700 3.700-3.700 3.700" /></Svg></Slot>
          <Slot $w={22}><Svg w={10} c="#eee" s={1.3}><path d="M8.300 7A4 4 0 1 1 8 2.600" /><path d="M9.500 0v4h-4z" fill="#eee" stroke="none" /></Svg></Slot>
          <Slot $w={22}><Svg w={10} c="#eee" s={1.1}><path d="M.8 5.300L5 1.200l4.200 4.100M2.200 4.500v4.900h5.600V4.500" /></Svg></Slot>
        </NavButtons>
        <Omnibox>
          <Svg w={7} h={9} c="none"><rect y="3.5" width="7" height="5.5" rx=".6" fill="#eee" /><path d="M1.8 3.800V2.400a1.700 1.700 0 0 1 3.400 0v1.400" stroke="#eee" /></Svg>
          <Url><b>balsamiq.cloud</b>/sq4pyeq/pvyatin/r2278</Url>
          <Slot $w={22}><Svg w={10} c="none"><rect width="7" height="8" rx=".8" fill="#aaa" /><path d="M5 2.500h4.500v7H4.500" stroke="#aaa" /><path d="M5.500 4.500h3.500M7 4.500c0 2-1 3-2 3.500M5.500 5.500l3 3" stroke="#888" strokeWidth=".7" /><path d="M4.700 3A1.700 1.700 0 1 0 5 4.400H3.700" stroke="#333" strokeWidth=".8" /></Svg></Slot>
          <Slot $w={23}><Svg w={10} c="#ccc"><path d="M5 .9l1.200 2.900 3.100.3-2.400 2 .8 3L5 7.500 2.300 9.100l.8-3-2.400-2 3.100-.3z" /></Svg></Slot>
        </Omnibox>
        <Slot $w={32}><Svg w={12} c="none"><path d="M3.500 0h5L12 3.500v5L8.500 12h-5L0 8.500v-5z" fill="#d3140c" /><text x="6" y="8" fontSize="5" fontWeight="700" fill="#fff" textAnchor="middle">ABP</text></Svg></Slot>
        <Slot $w={12}><Svg w={11} c="#fff" s={2}><rect width="11" height="11" fill="#0d3e74" stroke="none" /><path d="M6.600 1.500v5.300c0 2-2.800 2.100-3.300.5M4.500 2.300h3" /></Svg></Slot>
        <Slot $w={32}><Svg w={7} c="none"><path d="M1 4C2 2 4 1.500 5.500.5 6.500 2 6.800 6 4 6.500 2 7 0 6 1 4z" fill="#c88434" /></Svg></Slot>
        <Slot $w={13}><Svg w={10} c="none" f="#eee"><path d="M0 2.200h3C2.500.5 3.200 0 4 0s1.500.5 1 2.200h3v3c1.500-.5 2 .2 2 1s-.5 1.500-2 1V10H5.300c.3-1.500-.4-2-1.200-2s-1.500.5-1.200 2H0V7.300c1.400.3 2-.3 2-1.100S1.500 5 0 5.200z" /></Svg></Slot>
        <Slot $w={32}><Svg w={15} c="none"><circle cx="7.5" cy="7.5" r="7.5" fill="#aaa6a8" /><path d="M1 4a7.500 7.500 0 0 1 5-3.800L6 8l-5 2z" fill="#ddd" /><path d="M7 2c3-1.500 5 1 4 4l3 4c-1 3-3 5-6.500 5L4 12l3-4z" fill="#40262a" /><path d="M6 9l4-2 1 5-5 2z" fill="#8f4c4c" /></Svg></Slot>
        <Slot $w={11}><Svg w={3} h={10} c="none" f="#ddd"><path d="M.6 0h2v2h-2zM.6 4h2v2h-2zM.6 8h2v2h-2z" /></Svg></Slot>
      </AddressRow>

      <Bookmarks>
        {bookmarks.map((b) => (
          <Bookmark key={b.t} $w={b.w} $gap={b.gap}>{b.i}<Label $ls={b.ls ?? -0.36}>{b.t}</Label></Bookmark>
        ))}
        <More>»</More>
      </Bookmarks>

      <Header>
        <TitleRow>
          <Crumbs>
            <Svg w={15} s={1.1}><circle cx="7.5" cy="8" r="6.5" /><path d="M4 8.800c1.200 3.400 5.800 3.400 7 0z" /><path d="M5.300 5v1.500M9.700 5v1.500" strokeWidth="1.3" /></Svg>
            <Label $ls={-0.1}>&gt;</Label><Label $ls={-0.1}>Pro</Label><Label>&gt;</Label><Label $ls={-0.24}>New Project</Label>
          </Crumbs>
          <Menus>{["Project", "Edit", "View", "Help"].map((m) => <Label key={m} $ls={-0.2}>{m}</Label>)}</Menus>
          <Account>
            <PencilButton><Svg w={19} h={12} c="#aaa"><path d="M1 11l1-3.500L8.500 1 11 3.500 4.500 10zM7 2.500L9.500 5" /><path d="M13 5.500l2.500 2.500L18 5.500" /></Svg></PencilButton>
            <ShareButton>
              <Svg w={12} h={11} c="#fff" s={0.9}><circle cx="3.3" cy="3" r="2" /><circle cx="8.7" cy="3" r="2" /><path d="M.5 10.500C.5 7 1.500 5.800 3.300 5.800S6 7 6 10.500zM6 10.500C6 7 7 5.800 8.700 5.800s2.800 1.200 2.800 4.700z" /></Svg>
              Share
            </ShareButton>
            <Svg w={14} c="none"><path d="M0 0h14v14H0z" fill="#eef2e8" /><path d="M3.500 4.500a3.500 3.500 0 0 1 7 0c0 2-1 3-1.500 4l4 2V13H1v-2.500l4-2c-.5-1-1.500-2-1.500-4z" fill="#999" /><path d="M.5 .5h13v13H.5z" stroke="#a8c890" strokeWidth=".7" /></Svg>
          </Account>
        </TitleRow>
        <ToolRow>
          <Slot $w={9} />
          {leftTools.map(([w, i], n) => <Slot key={n} $w={w}>{i}</Slot>)}
          <Slot $w={234} />
          {midTools.map(([w, i], n) => <Slot key={n} $w={w}>{i}</Slot>)}
          <QuickAdd>
            <Svg w={7} h={8} c="#fff" s={1.5}><circle cx="3.5" cy="3.3" r="2.5" /><path d="M5.200 5.300L7 7.500" /></Svg>
            Quick Add
          </QuickAdd>
          {rightTools.map(([w, i], n) => <Slot key={n} $w={w}>{i}</Slot>)}
        </ToolRow>
      </Header>

      <CategoryBar>
        {categories.map(([t, w]) => <Pill key={t} $w={w} $on={t === "Big"}>{t}</Pill>)}
        <Pill $w={82} $end>
          <Svg w={8} c="#666"><path d="M4 0v5.500M2 3.800l2 2 2-2M.5 5v2.500h7V5" strokeWidth=".8" /></Svg>
          More Controls...
        </Pill>
      </CategoryBar>

      <Shelf>
        {shelf.map(([t, i]) => <ShelfItem key={t}><Preview>{i}</Preview><Label $ls={-0.2}>{t}</Label></ShelfItem>)}
      </Shelf>
      <HScroll $h={12} $line><Tri d="l" c="#999" /><HThumb $w={816} /><Tri d="r" c="#333" /></HScroll>

      <Work>
        <Editor>
          <CanvasRow>
            <Canvas>
              <MockWindow>
                <MockTop>
                  <MockTitle>A Web Page</MockTitle>
                  <MockNav>
                    <Slot $w={35}><Svg w={19} h={17} c={cm} s={1.8}><path d="M.8 8.500L8 1.200l1 3.700 9.200.4-.2 7.400-9 .2.200 3.200z" fill="#fff" strokeLinejoin="round" /></Svg></Slot>
                    <Slot $w={16}><Svg w={19} h={18} c={cm} s={1.8}><path d="M18.500 9L11.500 1l-.6 4-9.800.3.700 8.600 9-.4.600 3.400z" fill="#fff" strokeLinejoin="round" /></Svg></Slot>
                    <Slot $w={32}><Svg w={10} h={12} c={cm} s={2.8}><path d="M1 1l7.800 10M9 1L1.200 11.400" /></Svg></Slot>
                    <Slot $w={8}><Svg w={15} h={18} c={cm} s={1.8}><path d="M7.500 .8L.8 9l2.400.5v7.800l3-.5.500-4h2l.6 4.300 3.200.2.100-7.600 2.200-.2z" fill="#fff" strokeLinejoin="round" /></Svg></Slot>
                    <Slot $w={5} />
                    <MockUrl>https://Monantainha.com</MockUrl>
                    <Slot $w={42}><Svg w={42} h={15} c={cm} s={1.7}><path d="M3 3C7 -.5 30 -.5 37 2.500c4.500 2.500 4.500 8 1 11-6 2-23 1.500-31 .5C.5 13-.5 6.500 3 3z" fill="#fff" /><circle cx="6.500" cy="7.500" r="2.300" /><path d="M8 9l2 3" /></Svg></Slot>
                  </MockNav>
                </MockTop>
                <MockFoot><Svg w={12} h={9} c={cm} s={2}><path d="M1 7.500L9 1M6 8.500L11 4" /></Svg></MockFoot>
              </MockWindow>
              <Modal />
              {[[120, 49], [186, 49], [253, 49], [120, 184], [252, 184], [120, 318], [186, 318], [253, 318]].map(([x, y]) => <Handle key={`${x}-${y}`} $x={x} $y={y} />)}
            </Canvas>
            <VScroll><Tri d="u" c="#999" /><VThumb /><Tri d="d" c="#333" /></VScroll>
          </CanvasRow>
          <BottomScroll>
            <HScroll $h={11}><Tri d="l" c="#999" /><HThumb $w={741} /><Tri d="r" c="#333" /></HScroll>
            <Corner />
          </BottomScroll>
        </Editor>
        <Inspector>
          <PanelTitle>Modal Screen <Chev w={10} /></PanelTitle>
          <Panel>
            <Field $h={29.5}>
              <FieldName>Position</FieldName>
              <NumberCell><NumberBox>175</NumberBox>X</NumberCell>
              <NumberCell><NumberBox>73</NumberBox>Y</NumberCell>
            </Field>
            <Field $h={29.5}>
              <FieldName>Size</FieldName>
              <NumberCell><NumberBox>191</NumberBox>width</NumberCell>
              <NumberCell><NumberBox>387</NumberBox>height</NumberCell>
            </Field>
            <Section $h={24}>
              Layering
              <LayerIcons>{layer(true)}{layer(true, "M7 2v4M5.400 3.400L7 1.800l1.600 1.600")}{layer(true, "M7 1.500v3.500M5.400 3.800L7 5.400l1.600-1.600")}{layer(false)}</LayerIcons>
            </Section>
            <Section $h={24.5}>Links<Help>?</Help></Section>
            <LinkRow>
              <Select>No Link<SelectArrow><Svg w={7} h={5} c="#555"><path d="M.6 .5h5.800L3.500 4.400z" /></Svg></SelectArrow></Select>
              <u>Hide</u>
            </LinkRow>
          </Panel>
        </Inspector>
      </Work>

      <Taskbar>
        {tasks.map((t, n) => <Task key={n} $w={t.w || 34.4} $ml={t.ml} $running={t.running} $active={t.active}>{t.i}</Task>)}
        <Tray>
          <Slot $w={30}><Svg w={11} h={12}><circle cx="7.5" cy="2.5" r="2" /><circle cx="3" cy="5.5" r="1.8" /><path d="M.5 11C.5 8.500 1.500 7.500 3 7.500s2.500 1 2.500 2.500M5.500 6.500C8 4 10.500 5.500 10.500 8" /></Svg></Slot>
          <Slot $w={22}><Svg w={8} h={5}><path d="M.5 4.500L4 .8l3.500 3.700" /></Svg></Slot>
          <Slot $w={11}><Svg w={11} c="none"><path d="M0 0h11v11H0z" fill="#e9d6d6" /><path d="M2.500 2.500l3 6.500 3-6.500" stroke="#d4202a" strokeWidth="1.8" /></Svg></Slot>
          <Slot $w={23}><Svg w={11} h={8}><path d="M3.500 1.500h6v5h-6zM10.500 3v2M.5 .5h3M1 .5v2h2v-2M2 3v3h1.500" /></Svg></Slot>
          <Slot $w={10}><Svg w={9} s={0.9}><path d="M.5 8.500a8 8 0 0 1 8-8M3 8.500A5.500 5.500 0 0 1 8.500 3M5.300 8.500a3.200 3.200 0 0 1 3.200-3.200" /><circle cx="8" cy="8" r=".7" fill="currentColor" /></Svg></Slot>
          <Slot $w={22}><Svg w={11} h={9} s={0.9}><path d="M.5 3h1.700L4.500.8v7.400L2.200 6H.5zM6 3c.7 1 .7 2 0 3M7.500 1.700c1.500 1.700 1.500 4 0 5.600M9.200.5c2 2.300 2 5.700 0 8" /></Svg></Slot>
          <Slot $w={21}><Label $ls={-0.1}>ENG</Label></Slot>
          <Slot $w={47}><Clock>7:40 PM<br />03/23/21</Clock></Slot>
          <Slot $w={30}><Svg w={17} h={17} c="none"><path d="M0 2h12v10H5l-2 2v-2H0z" fill="#eee" /><path d="M2 4.500h8M2 6.500h8M2 8.500h5" stroke="#333" /><circle cx="11.5" cy="12.5" r="4.8" fill="#333" stroke="#888" strokeWidth=".8" /><text x="11.5" y="15.4" fontSize="8" fill="#fff" textAnchor="middle">7</text></Svg></Slot>
          <ShowDesktop />
        </Tray>
      </Taskbar>
    </Screen>
  );
}
